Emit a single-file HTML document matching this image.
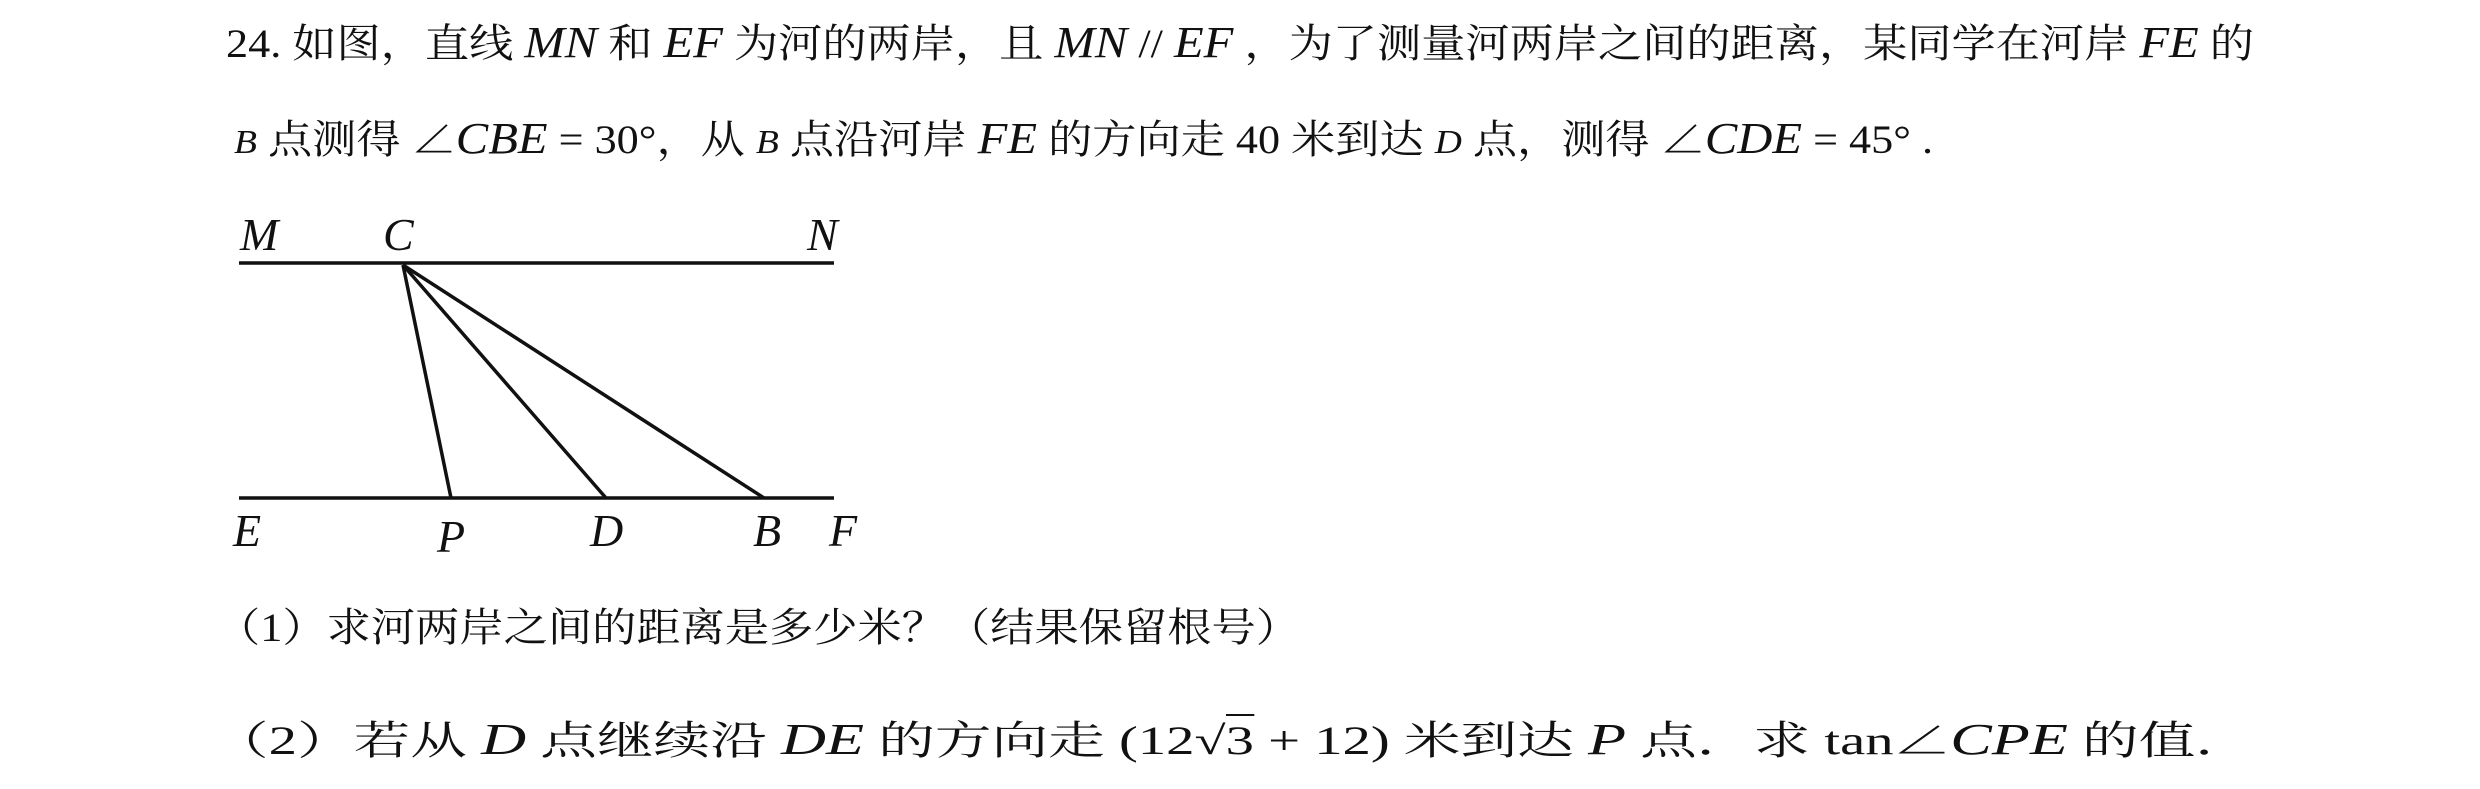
<!DOCTYPE html>
<html><head><meta charset="utf-8">
<style>
html,body{margin:0;padding:0;background:#fff;}
body{width:2480px;height:789px;position:relative;overflow:hidden;font-family:"Liberation Serif","Noto Serif CJK SC",serif;color:#111;}
.ln{position:absolute;white-space:nowrap;font-size:40px;line-height:50px;transform-origin:0 50%;}
i{font-style:italic;font-family:"Liberation Serif",serif;font-size:44px;}
.sm{font-size:34px;}
.lb{position:absolute;font-style:italic;font-size:46px;line-height:46px;font-family:"Liberation Serif",serif;}
.sq{border-top:2px solid #111;padding-top:2px;}
</style></head><body>
<div class="ln" id="l1" data-w="2028" style="left:226px;top:18px;">24. 如图，直线 <i>MN</i> 和 <i>EF</i> 为河的两岸，且 <i>MN</i> // <i>EF</i> ，为了测量河两岸之间的距离，某同学在河岸 <i>FE</i> 的</div>
<div class="ln" id="l2" data-w="1699" style="left:234px;top:114px;"><i class="sm">B</i> 点测得 ∠<i>CBE</i> = 30°，从 <i class="sm">B</i> 点沿河岸 <i>FE</i> 的方向走 40 米到达 <i class="sm">D</i> 点，测得 ∠<i>CDE</i> = 45° .</div>
<div class="ln" id="l3" data-w="1084" style="left:216px;top:603px;">（1）求河两岸之间的距离是多少米？（结果保留根号）</div>
<div class="ln" id="l4" data-w="2040" style="left:212px;top:715px;">（2）若从 <i>D</i> 点继续沿 <i>DE</i> 的方向走 (12√<span class="sq">3</span> + 12) 米到达 <i>P</i> 点．求 tan∠<i>CPE</i> 的值．</div>

<svg width="2480" height="789" style="position:absolute;left:0;top:0" xmlns="http://www.w3.org/2000/svg">
<g stroke="#111" stroke-width="3.5" fill="none">
<line x1="239" y1="263" x2="834" y2="263"/>
<line x1="239" y1="498" x2="834" y2="498"/>
<line x1="403" y1="265" x2="451" y2="498"/>
<line x1="403" y1="265" x2="606" y2="498"/>
<line x1="403" y1="265" x2="764" y2="498"/>
</g>
</svg>
<div class="lb" style="left:240px;top:212px;">M</div>
<div class="lb" style="left:383px;top:212px;">C</div>
<div class="lb" style="left:807px;top:212px;">N</div>
<div class="lb" style="left:233px;top:508px;">E</div>
<div class="lb" style="left:437px;top:514px;">P</div>
<div class="lb" style="left:590px;top:508px;">D</div>
<div class="lb" style="left:753px;top:508px;">B</div>
<div class="lb" style="left:829px;top:508px;">F</div>
<script>
document.querySelectorAll('.ln').forEach(function(e){
  var w=e.getBoundingClientRect().width, t=+e.getAttribute('data-w');
  if(w>0) e.style.transform='scaleX('+(t/w)+')';
});
</script>
</body></html>
